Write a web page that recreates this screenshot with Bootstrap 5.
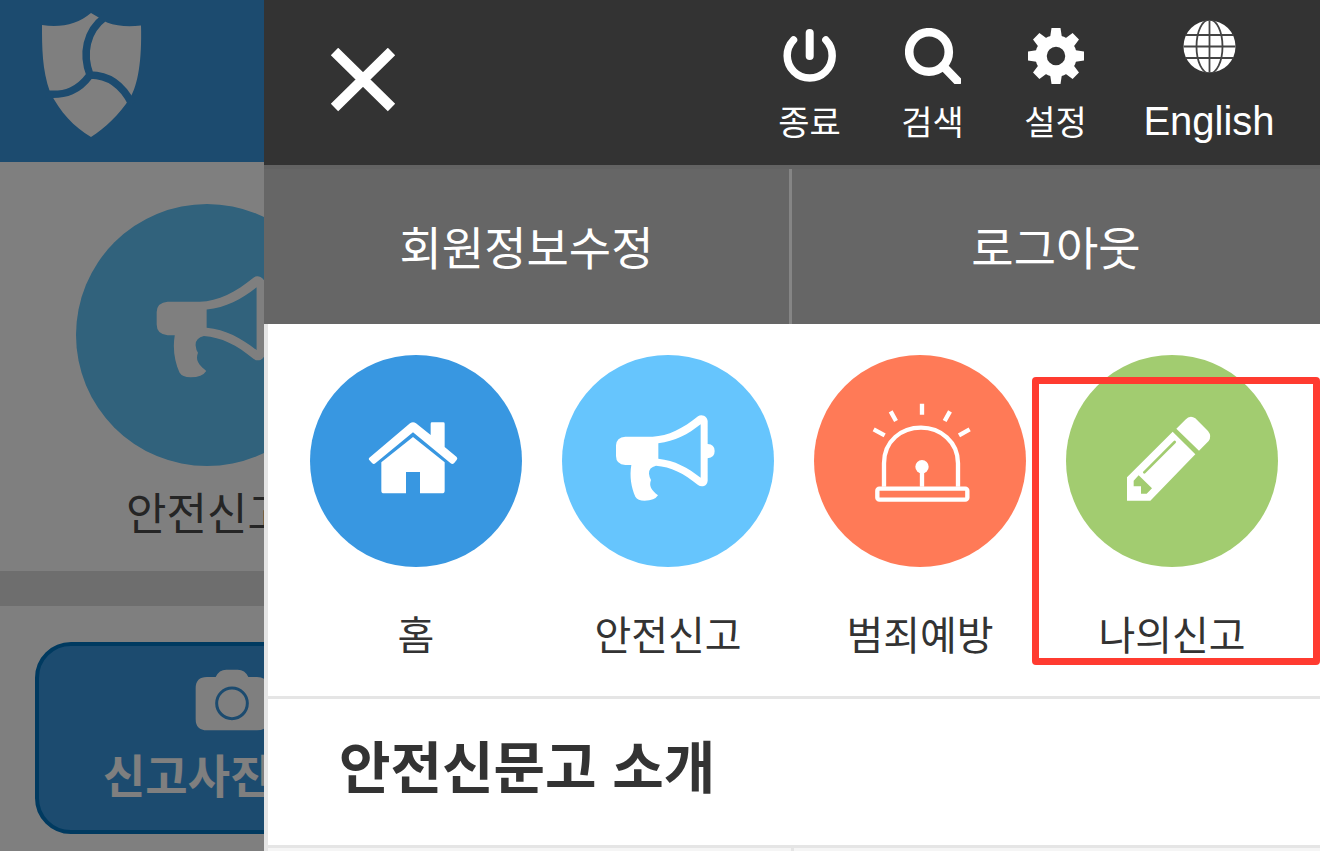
<!DOCTYPE html>
<html lang="ko">
<head>
<meta charset="utf-8">
<meta name="viewport" content="width=device-width, initial-scale=1">
<title>안전신문고</title>
<link href="https://cdn.jsdelivr.net/npm/bootstrap@5.3.0/dist/css/bootstrap.min.css" rel="stylesheet">
<style>
  body { font-family: "Noto Sans CJK KR", sans-serif; color: #333; background: #fff; }
  a, button { color: inherit; text-decoration: none; }
  svg { display: block; }

  /* page behind the open menu */
  .page-behind { flex: 0 0 20%; min-width: 0; background: #fff; }
  .page-behind::after { content: ""; position: absolute; inset: 0; background: rgba(0, 0, 0, .5); }
  .page-head { height: 162px; background: #3897df; padding: 12px 40px; }
  .report-link { width: 262px; margin: 42px 0 0 76px; }
  .report-disc { background: #62c4f8; }
  .report-text { font-size: 44px; line-height: 64px; padding: 13px 0 28px; color: #4a4a4a; }
  .divider-band { height: 35px; background: #dcdcdc; }
  .photo-btn { width: 394px; height: 192px; margin: 36px 0 0 35px; border: 4px solid #0074c0; border-radius: 36px; background: #3897df; color: #fff; padding: 23px 64px 0; font-size: 46px; line-height: 64px; gap: 10px; }

  /* side menu */
  .menu-head { height: 165px; background: #333; padding: 0 19px 0 66px; }
  .tool { width: 123px; font-size: 34px; line-height: 48px; gap: 13px; padding-bottom: 20px; }
  .tool-wide { width: 184px; font-family: "Liberation Sans", sans-serif; font-size: 40px; gap: 24px; }
  .account { height: 159px; background: #666; border-top: 4px solid #636363; font-size: 46px; line-height: 64px; }
  .account a { padding-bottom: 4px; }
  .account a:first-child { border-right: 3px solid #858585; }
  .menu-body { border-left: 4px solid #e5e5e5; }
  .shortcuts { padding: 31px 22px 31px; border-bottom: 3px solid #e5e5e5; }
  .disc { width: 212px; }
  .c-home { background: #3897e1; }
  .c-report { background: #66c5fd; }
  .c-crime { background: #ff7a57; }
  .c-mine { background: #a2cc70; }
  .shortcut-text { font-size: 40px; line-height: 56px; padding: 38px 0 4px; }
  .focus-box { position: absolute; inset: 22px -22px 0 -14px; border: 7px solid #ff3b30; border-radius: 4px; pointer-events: none; }
  .section-title { font-size: 56px; line-height: 80px; padding: 25px 71px 41px; border-bottom: 3px solid #e5e5e5; }
  .sub-row { background: #f5f5f5; }
  .sub-row div:first-child { border-right: 3px solid #e5e5e5; }
</style>
</head>
<body>
<svg width="0" height="0" class="position-absolute" aria-hidden="true">
  <symbol id="megaphone" viewBox="666 -105 636 636" overflow="visible">
    <path fill="#fff" fill-rule="evenodd" d="M856 140H938C984 139 1030 115 1074 79Q1081 73 1092 77Q1102 82 1103 93V162Q1124 163 1124 183Q1124 203 1103 205V272Q1102 283 1092 288Q1082 291 1074 285C1032 250 992 230 948 227Q926 232 927 251Q928 262 933 270C926 288 934 300 954 316Q944 332 914 332Q893 332 886 320C874 293 868 260 874 225H856Q828 223 828 198V166Q829 142 856 140ZM955 160V206C1004 211 1044 233 1082 263V103C1044 133 1005 154 955 160Z"/>
  </symbol>
</svg>

<div class="d-flex min-vh-100">
  <div class="page-behind position-relative overflow-hidden">
    <div class="page-head">
      <svg width="103" height="128" viewBox="40 12 103 128" role="img" aria-label="안전신문고">
        <path fill="#fff" d="M42 25C61 28 78 24 91 13Q98 17 107 22.500Q122 28 141 25.500C142 60 138 85 130 98C119 115 105 128 91 137C74 127 60 112 50 92C42 70 42 47 42 25Z"/>
        <path fill="none" stroke="#3897df" stroke-width="7.500" d="M105 17C86 31 82 54 90 75C79 90 66 96 46 94M90 75C108 75 122 84 132 104"/>
      </svg>
    </div>
    <a href="#report" class="report-link d-block text-center">
      <span class="report-disc d-block rounded-circle">
        <svg class="w-100" viewBox="228 72 786 786"><g transform="translate(-507 200) scale(1.180)"><use href="#megaphone" x="666" y="-105" width="636" height="636"/></g></svg>
      </span>
      <span class="report-text d-block">안전신고</span>
    </a>
    <div class="divider-band"></div>
    <button type="button" class="photo-btn d-flex flex-column justify-content-start text-start">
      <svg class="mx-auto flex-shrink-0" width="74" height="62" viewBox="586 326 222 186">
        <path fill="#fff" d="M622 350H648Q658 328 680 328H714Q736 328 746 350H772Q806 350 806 384V476Q806 510 772 510H622Q588 510 588 476V384Q588 350 622 350Z"/>
        <circle cx="697" cy="429" r="46" fill="none" stroke="#3897df" stroke-width="9"/>
      </svg>
      <span class="fw-bold">신고사진</span>
    </button>
  </div>

  <nav class="flex-grow-1 d-flex flex-column bg-white" aria-label="전체 메뉴">
    <header class="menu-head d-flex justify-content-between text-white">
      <button type="button" class="bg-transparent border-0 p-0 align-self-center" aria-label="닫기">
        <svg width="66" height="70" viewBox="0 0 66 70"><path d="M4.500 3.500L61.500 59.500M61.500 3.500L4.500 59.500" stroke="#fff" stroke-width="10.500"/></svg>
      </button>
      <div class="d-flex">
        <a href="#exit" class="tool d-flex flex-column align-items-center justify-content-end">
          <svg width="56" height="56" viewBox="0 0 56 56" fill="none" stroke="#fff" stroke-linecap="round"><path stroke-width="7.500" d="M11.500 12A22.500 22.500 0 1 0 43.900 12"/><path stroke-width="8" d="M27.700 5V28"/></svg>
          <span>종료</span>
        </a>
        <a href="#search" class="tool d-flex flex-column align-items-center justify-content-end">
          <svg width="56" height="56" viewBox="0 0 56 56" fill="none" stroke="#fff"><circle cx="24" cy="24" r="19.800" stroke-width="8.600"/><path stroke-width="8.500" stroke-linecap="round" d="M38 38L52.500 53"/></svg>
          <span>검색</span>
        </a>
        <a href="#settings" class="tool d-flex flex-column align-items-center justify-content-end">
          <svg width="56" height="56" viewBox="-28 -28 56 56" fill="#fff">
            <circle r="15" fill="none" stroke="#fff" stroke-width="11.500"/>
            <g id="teeth"><path d="M-4.500 -28H4.500L6 -18H-6ZM-4.500 28H4.500L6 18H-6ZM-28 -4.500V4.500L-18 6V-6ZM28 -4.500V4.500L18 6V-6Z"/></g>
            <use href="#teeth" transform="rotate(45)"/>
          </svg>
          <span>설정</span>
        </a>
        <a href="#english" class="tool tool-wide d-flex flex-column align-items-center justify-content-end">
          <svg width="53" height="53" viewBox="-26.500 -26.500 53 53"><circle r="26" fill="#fff"/><g fill="none" stroke="#444" stroke-width="1.800"><path d="M0 -26V26M-26 0H26M-24 -11.500H24M-24 11.500H24"/><ellipse rx="13" ry="27"/></g></svg>
          <span>English</span>
        </a>
      </div>
    </header>

    <div class="account d-flex text-white text-center">
      <a href="#profile" class="w-50 d-flex align-items-center justify-content-center">회원정보수정</a>
      <a href="#logout" class="w-50 d-flex align-items-center justify-content-center">로그아웃</a>
    </div>

    <div class="menu-body flex-grow-1 d-flex flex-column">
      <div class="shortcuts">
        <div class="row g-0 text-center">
          <a href="#home" class="col-3">
            <span class="disc c-home d-block rounded-circle mx-auto">
              <svg class="w-100" viewBox="-90 -105 636 636" fill="#fff"><path d="M88 203L210 100Q219 94 228 100L272 135V101Q272 97 276 97H310Q314 97 314 101V171L350 201Q354 205 350 210L342 220Q337 224 332 220L219 127L106 220Q101 224 96 219L87 209Q85 206 88 203Z"/><path d="M219 141L314 217V302Q314 310 306 310H240V246H198V310H132Q124 310 124 302V217Z"/></svg>
            </span>
            <span class="shortcut-text d-block">홈</span>
          </a>
          <a href="#report" class="col-3">
            <span class="disc c-report d-block rounded-circle mx-auto">
              <svg class="w-100" viewBox="0 0 636 636"><use href="#megaphone" width="636" height="636"/></svg>
            </span>
            <span class="shortcut-text d-block">안전신고</span>
          </a>
          <a href="#crime" class="col-3">
            <span class="disc c-crime d-block rounded-circle mx-auto">
              <svg class="w-100" viewBox="-78 -45 636 636" fill="none" stroke="#fff" stroke-width="13"><rect x="112" y="356" width="270" height="33" rx="6"/><path d="M132 350V280C132 212 185 173 243 173S354 215 354 280V350M246 290V350M246 101V134M152 124L168 153M330 124L314 153M101 178L134 196M389 178L357 196"/><circle cx="246" cy="290" r="20" fill="#fff" stroke="none"/></svg>
            </span>
            <span class="shortcut-text d-block">범죄예방</span>
          </a>
          <a href="#mine" class="col-3 position-relative">
            <span class="disc c-mine d-block rounded-circle mx-auto">
              <svg class="w-100" viewBox="680 -45 636 636" fill="#fff"><path d="M1011 176L1038 149Q1052 134 1068 145L1106 183Q1118 198 1108 213L1079 242Z"/><path fill-rule="evenodd" d="M863 322L1000 185L1068 253L933 392H863ZM898 316L883 332V349H905V371H922L938 355Z"/><path d="M915 307L1006 216" stroke="#a2cc70" stroke-width="8" stroke-linecap="round"/></svg>
            </span>
            <span class="shortcut-text d-block">나의신고</span>
            <span class="focus-box"></span>
          </a>
        </div>
      </div>
      <h2 class="section-title fw-bold m-0">안전신문고 소개</h2>
      <div class="sub-row flex-grow-1 d-flex"><div class="w-50"></div><div class="w-50"></div></div>
    </div>
  </nav>
</div>
<script src="https://cdn.jsdelivr.net/npm/bootstrap@5.3.0/dist/js/bootstrap.bundle.min.js"></script>
</body>
</html>
